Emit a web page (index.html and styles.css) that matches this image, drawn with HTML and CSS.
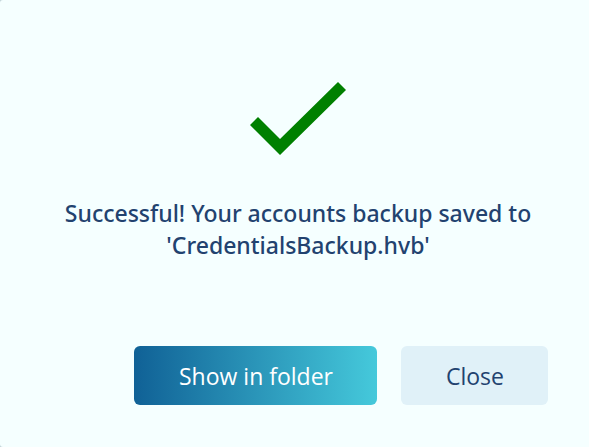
FILE: index.html
```html
<!DOCTYPE html>
<html lang="en">
<head>
<meta charset="utf-8">
<meta name="viewport" content="width=device-width, initial-scale=1">
<title>Backup saved</title>
<link rel="stylesheet" href="styles.css">
</head>
<body>
<main class="dialog">
  <svg class="check" viewBox="0 0 96 73" aria-hidden="true"><path d="M0 43 8 35 30 57 88 0 96 8 30 73Z"/></svg>
  <p class="message">Successful! Your accounts backup saved to 'CredentialsBackup.hvb'</p>
  <div class="actions">
    <button class="button primary" type="button">Show in folder</button>
    <button class="button secondary" type="button">Close</button>
  </div>
</main>
</body>
</html>
```

FILE: styles.css
```css
* {
  box-sizing: border-box;
}

body {
  margin: 0;
  background: #c3d3d8;
  font-family: "Segoe UI", "Open Sans", "Noto Sans", sans-serif;
  color: #22426f;
}

.dialog {
  display: flex;
  flex-direction: column;
  min-height: 100vh;
  padding: 82px 41px 42px 48px;
  border-radius: 3px 0 0 3px;
  background: #f5ffff;
}

.check {
  align-self: center;
  width: 96px;
  height: 73px;
  fill: #008000;
}

.message {
  margin: 42px 0 0;
  text-align: center;
  font-family: "Segoe UI", "Noto Sans", sans-serif;
  font-size: 23px;
  line-height: 32px;
  font-weight: 500;
}

.actions {
  display: flex;
  justify-content: flex-end;
  gap: 24px;
  margin-top: auto;
}

.button {
  padding: 13px 44px 11px 45px;
  border: 0;
  border-radius: 6px;
  font: inherit;
  font-size: 23px;
  line-height: 35px;
}

.primary {
  background: linear-gradient(90deg, #106196, #45c9db);
  color: #fff;
}

.secondary {
  background: #e0f1f8;
  color: #22426f;
}
```
